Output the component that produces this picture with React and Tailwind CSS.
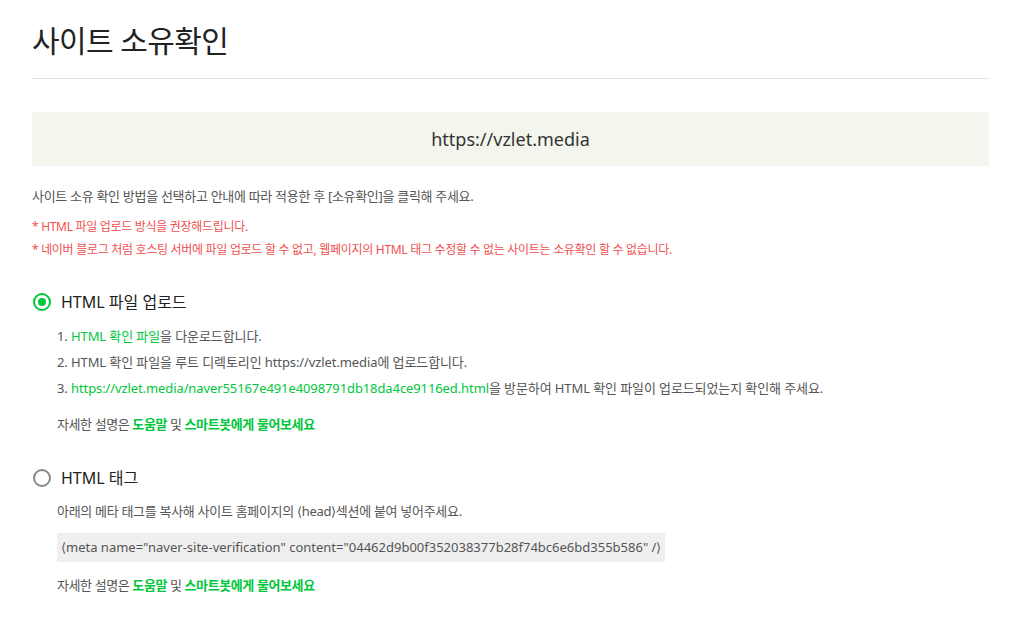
import React, { useState } from 'react';

const green = 'text-[#00c73c]';

function Radio({ checked }) {
  return (
    <span
      className={`flex h-[18px] w-[18px] shrink-0 items-center justify-center rounded-full border-2 ${
        checked ? 'border-[#00c73c]' : 'border-[#888]'
      }`}
    >
      {checked && <span className="h-[8px] w-[8px] rounded-full bg-[#00c73c]" />}
    </span>
  );
}

function HelpLine() {
  return (
    <p className="text-[13px] leading-[18px] tracking-[-0.4px] text-[#555]">
      자세한 설명은 <a className={`${green} font-semibold`}>도움말</a> 및{' '}
      <a className={`${green} font-semibold`}>스마트봇에게 물어보세요</a>
    </p>
  );
}

export default function App() {
  const [method, setMethod] = useState('file');
  const site = 'https://vzlet.media';

  return (
    <div
      className="min-h-screen bg-white px-[32px] pt-[20px]"
      style={{ fontFamily: '"Noto Sans", "Noto Sans CJK KR", sans-serif' }}
    >
      <div className="w-[957px]">
        {/* Header */}
        <h1 className="border-b border-[#e3e3e3] pb-[16px] text-[30px] leading-[42px] font-normal tracking-[-0.6px] text-[#222]">
          사이트 소유확인
        </h1>

        {/* Site box */}
        <div className="mt-[33px] flex h-[54px] items-center justify-center bg-[#f3f6ec] text-[18px] text-[#333]">
          {site}
        </div>

        {/* Guide */}
        <p className="mt-[21px] text-[13px] leading-[18px] tracking-[-0.3px] text-[#555]">
          사이트 소유 확인 방법을 선택하고 안내에 따라 적용한 후 [소유확인]을 클릭해 주세요.
        </p>
        <div className="mt-[13px] flex flex-col gap-[5px] text-[12px] leading-[18px] tracking-[-0.3px] text-[#f0504f]">
          <p>* HTML 파일 업로드 방식을 권장해드립니다.</p>
          <p>* 네이버 블로그 처럼 호스팅 서버에 파일 업로드 할 수 없고, 웹페이지의 HTML 태그 수정할 수 없는 사이트는 소유확인 할 수 없습니다.</p>
        </div>

        {/* Option 1 */}
        <button
          onClick={() => setMethod('file')}
          className="mt-[31px] flex items-center gap-[10px] pl-[1px]"
        >
          <Radio checked={method === 'file'} />
          <span className="text-[16px] leading-[24px] text-[#222]">HTML 파일 업로드</span>
        </button>
        <div className="pl-[25px]">
          <ol className="mt-[13px] flex flex-col gap-[8px] text-[13px] leading-[18px] tracking-[-0.1px] text-[#555]">
            <li>
              1. <a className={green}>HTML 확인 파일</a>을 다운로드합니다.
            </li>
            <li>2. HTML 확인 파일을 루트 디렉토리인 {site}에 업로드합니다.</li>
            <li>
              3. <a className={green}>{site}/naver55167e491e4098791db18da4ce9116ed.html</a>을 방문하여 HTML 확인 파일이 업로드되었는지 확인해 주세요.
            </li>
          </ol>
          <div className="mt-[18px]">
            <HelpLine />
          </div>
        </div>

        {/* Option 2 */}
        <button
          onClick={() => setMethod('tag')}
          className="mt-[33px] flex items-center gap-[10px] pl-[1px]"
        >
          <Radio checked={method === 'tag'} />
          <span className="text-[16px] leading-[24px] text-[#222]">HTML 태그</span>
        </button>
        <div className="pl-[25px]">
          <p className="mt-[12px] text-[13px] leading-[18px] tracking-[-0.3px] text-[#555]">
            아래의 메타 태그를 복사해 사이트 홈페이지의 ⟨head⟩섹션에 붙여 넣어주세요.
          </p>
          <div className="mt-[13px] inline-block bg-[#efefef] px-[4px] py-[5px] text-[13px] leading-[19px] text-[#555]">
            {'⟨meta name="naver-site-verification" content="04462d9b00f352038377b28f74bc6e6bd355b586" /⟩'}
          </div>
          <div className="mt-[14px]">
            <HelpLine />
          </div>
        </div>
      </div>
    </div>
  );
}
